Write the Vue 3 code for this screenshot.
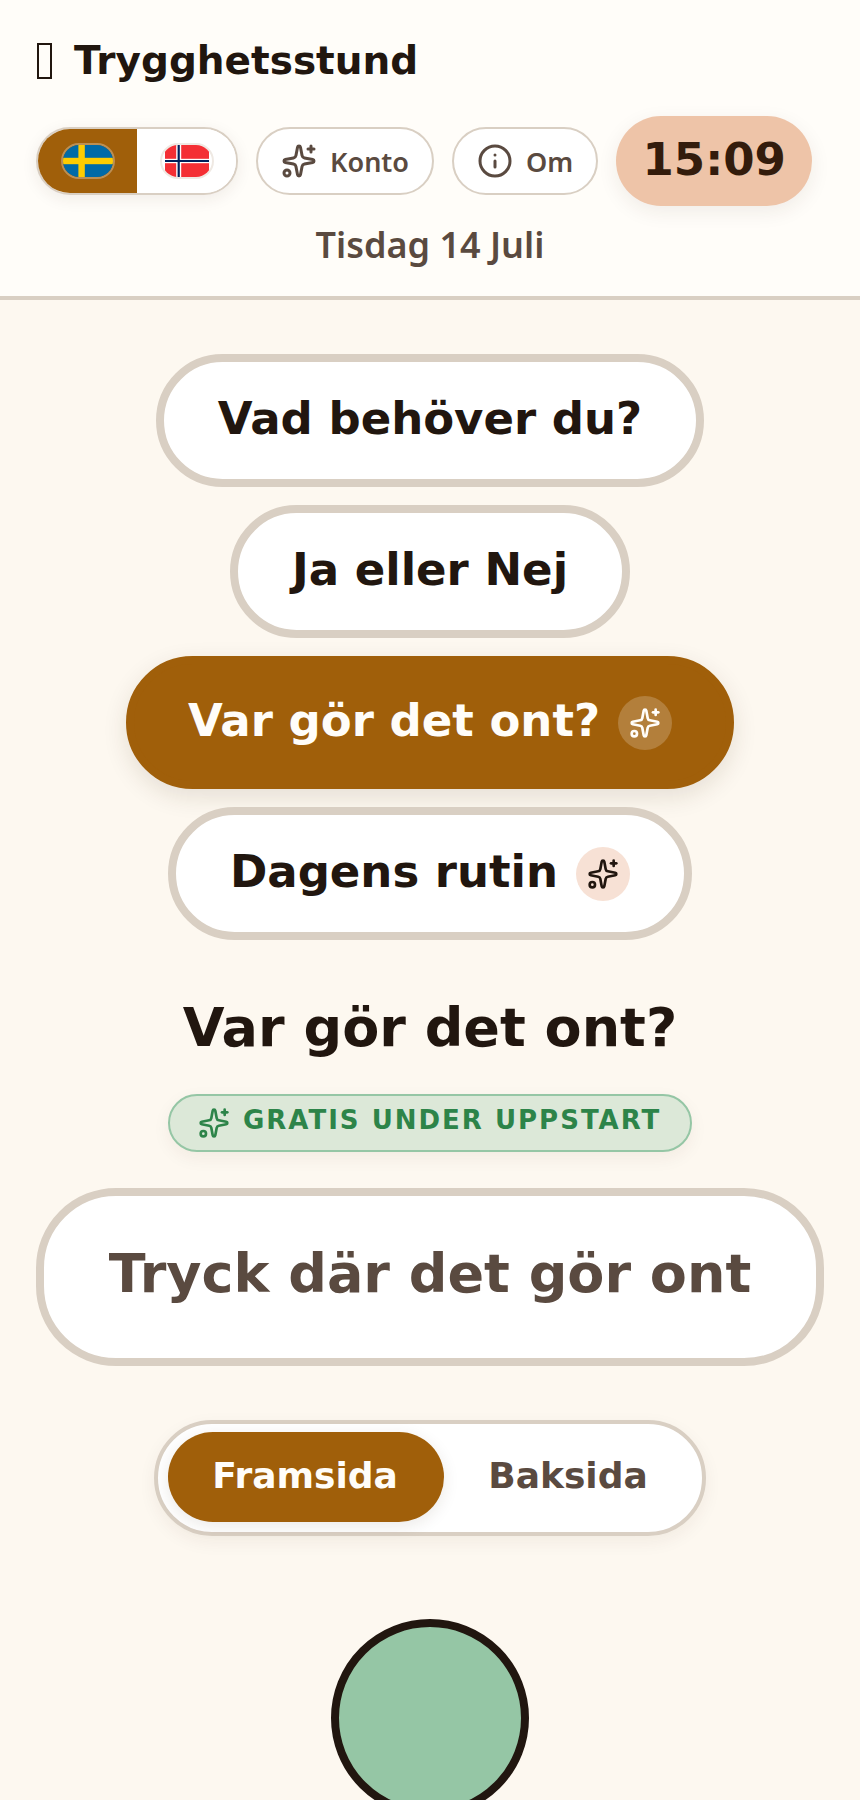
<template>
  <div class="page">
    <header class="top">
      <h1 class="brand"><span class="brand-icon"></span>Trygghetsstund</h1>
      <div class="controls">
        <div class="lang">
          <button class="lang-btn active">
            <svg class="flag se" viewBox="0 0 16 10" preserveAspectRatio="xMidYMid slice">
              <rect width="16" height="10" fill="#006aa7" />
              <rect x="5" width="2" height="10" fill="#fecc00" />
              <rect y="4" width="16" height="2" fill="#fecc00" />
            </svg>
          </button>
          <button class="lang-btn">
            <svg class="flag no" viewBox="0 0 22 16">
              <rect width="22" height="16" fill="#f42f34" />
              <rect x="5.6" width="2.5" height="16" fill="#fff" />
              <rect y="6.9" width="22" height="2.2" fill="#fff" />
              <rect x="6.3" width="1.1" height="16" fill="#00205b" />
              <rect y="7.5" width="22" height="1" fill="#00205b" />
            </svg>
          </button>
        </div>
        <button class="chip">
          <svg class="chip-icon" viewBox="0 0 24 24"><use href="#spark" /></svg>
          Konto
        </button>
        <button class="chip">
          <svg class="chip-icon" viewBox="0 0 24 24">
            <circle cx="12" cy="12" r="10" />
            <path d="M12 16v-4" />
            <path d="M12 8h.01" />
          </svg>
          Om
        </button>
        <div class="clock">15:09</div>
      </div>
      <div class="date">Tisdag 14 Juli</div>
    </header>

    <svg class="defs" width="0" height="0">
      <symbol id="spark" viewBox="0 0 24 24">
        <path d="M11.017 2.814a1 1 0 0 1 1.966 0l1.051 5.558a2 2 0 0 0 1.594 1.594l5.558 1.051a1 1 0 0 1 0 1.966l-5.558 1.051a2 2 0 0 0-1.594 1.594l-1.051 5.558a1 1 0 0 1-1.966 0l-1.051-5.558a2 2 0 0 0-1.594-1.594l-5.558-1.051a1 1 0 0 1 0-1.966l5.558-1.051a2 2 0 0 0 1.594-1.594z" />
        <path d="M20 2v4" />
        <path d="M22 4h-4" />
        <circle cx="4" cy="20" r="2" />
      </symbol>
    </svg>

    <main class="content">
      <nav class="menu">
        <button v-for="item in menu" :key="item.label" class="menu-btn" :class="{ active: item.active }">
          <span class="menu-label">{{ item.label }}</span>
          <span v-if="item.spark" class="spark-dot">
            <svg viewBox="0 0 24 24"><use href="#spark" /></svg>
          </span>
        </button>
      </nav>

      <h2 class="heading">Var gör det ont?</h2>
      <div class="badge">
        <svg viewBox="0 0 24 24"><use href="#spark" /></svg>
        <span class="badge-label">GRATIS UNDER UPPSTART</span>
      </div>
      <div class="prompt">Tryck där det gör ont</div>

      <div class="side-toggle">
        <button class="side active">Framsida</button>
        <button class="side">Baksida</button>
      </div>

      <svg class="head" viewBox="0 0 198 198">
        <circle cx="99" cy="99" r="95" />
      </svg>
    </main>
  </div>
</template>

<script setup>
  const menu = [
    { label: 'Vad behöver du?' },
    { label: 'Ja eller Nej' },
    { label: 'Var gör det ont?', active: true, spark: true },
    { label: 'Dagens rutin', spark: true },
  ];
</script>

<style>
  body {
    background: #fdf8f0;
  }
</style>

<style scoped>
  .page {
    font-family: 'DejaVu Sans', sans-serif;
    color: #21160f;
  }

  button {
    font-family: inherit;
    cursor: pointer;
  }

  .defs {
    position: absolute;
  }

  svg {
    fill: none;
    stroke: currentColor;
    stroke-width: 2;
    stroke-linecap: round;
    stroke-linejoin: round;
  }

  .top {
    background: #fffdf9;
    border-bottom: 4px solid #d9cfc3;
    padding: 32px 36px 27px;
  }

  .brand {
    display: flex;
    align-items: center;
    gap: 22px;
    margin: 0;
    padding-left: 1px;
    font-size: 39px;
    line-height: 58px;
    font-weight: 700;
  }

  /* missing-glyph box in front of the name */
  .brand-icon {
    width: 15px;
    height: 36px;
    box-sizing: border-box;
    border: 2px solid #21160f;
  }

  .controls {
    display: flex;
    align-items: center;
    gap: 18px;
    margin-top: 26px;
  }

  .lang {
    display: flex;
    width: 202px;
    height: 68px;
    box-sizing: border-box;
    border: 2px solid #d9cfc3;
    border-radius: 34px;
    overflow: hidden;
    background: #fff;
    box-shadow: 0 4px 16px rgba(60, 40, 20, 0.08);
  }

  .lang-btn {
    flex: 1;
    border: none;
    background: #fff;
    padding: 0;
    display: flex;
    align-items: center;
    justify-content: center;
  }

  .lang-btn.active {
    background: #a05f0a;
  }

  .flag {
    width: 54px;
    height: 36px;
    box-sizing: border-box;
    border-radius: 18px;
    stroke: none;
  }

  .flag.se {
    border: 2px solid rgba(255, 255, 255, 0.3);
  }

  .flag.no {
    border: 2px solid #efe9e3;
  }

  .chip {
    display: flex;
    align-items: center;
    gap: 13px;
    height: 68px;
    box-sizing: border-box;
    padding: 0 23px;
    border: 2px solid #d9cfc3;
    border-radius: 34px;
    background: #fff;
    color: #5a4a40;
    font-family: 'Noto Sans', sans-serif;
    font-size: 27px;
    font-weight: 600;
  }

  .chip-icon {
    width: 36px;
    height: 36px;
  }

  .clock {
    width: 196px;
    height: 90px;
    box-sizing: border-box;
    padding-bottom: 4px;
    border-radius: 45px;
    background: #eec4a8;
    color: #331c0c;
    font-size: 45px;
    font-weight: 700;
    display: flex;
    align-items: center;
    justify-content: center;
    box-shadow: 0 6px 20px rgba(60, 40, 20, 0.08);
  }

  .date {
    margin-top: 14px;
    text-align: center;
    font-family: 'Noto Sans', sans-serif;
    font-size: 36px;
    line-height: 49px;
    font-weight: 600;
    color: #5a4a40;
  }

  .content {
    display: flex;
    flex-direction: column;
    align-items: center;
    padding: 54px 36px 0;
  }

  .menu {
    display: flex;
    flex-direction: column;
    align-items: center;
    gap: 18px;
  }

  .menu-btn {
    display: flex;
    align-items: center;
    gap: 18px;
    height: 133px;
    box-sizing: border-box;
    padding: 0 54px;
    border: 8px solid #d9cfc3;
    border-radius: 67px;
    background: #fff;
    color: #21160f;
    font-size: 45px;
    font-weight: 700;
  }

  .menu-label {
    margin-bottom: 5px;
  }

  .menu-btn.active {
    background: #a05f0a;
    border-color: #a05f0a;
    color: #fffdf9;
    box-shadow: 0 8px 24px rgba(60, 40, 20, 0.12);
  }

  .spark-dot {
    width: 54px;
    height: 54px;
    border-radius: 50%;
    background: #f7e1d5;
    display: flex;
    align-items: center;
    justify-content: center;
  }

  .menu-btn.active .spark-dot {
    background: rgba(255, 255, 255, 0.2);
  }

  .spark-dot svg {
    width: 32px;
    height: 32px;
  }

  .heading {
    margin: 55px 0 0;
    font-size: 54px;
    line-height: 66px;
    font-weight: 700;
  }

  .badge {
    display: flex;
    align-items: center;
    gap: 13px;
    width: 524px;
    height: 58px;
    box-sizing: border-box;
    margin-top: 33px;
    padding: 0 28px;
    border: 2px solid #95c6a5;
    border-radius: 29px;
    background: #dce8d8;
    color: #2d8449;
    font-size: 26px;
    font-weight: 700;
    letter-spacing: 2px;
    white-space: nowrap;
    box-shadow: 0 6px 18px rgba(60, 40, 20, 0.06);
  }

  .badge svg {
    width: 32px;
    height: 32px;
  }

  .badge-label {
    margin-bottom: 6px;
  }

  .prompt {
    width: 788px;
    height: 178px;
    box-sizing: border-box;
    margin-top: 36px;
    padding-bottom: 8px;
    border: 8px solid #d9cfc3;
    border-radius: 80px;
    background: #fff;
    color: #5a4a40;
    font-size: 54px;
    font-weight: 700;
    display: flex;
    align-items: center;
    justify-content: center;
  }

  .side-toggle {
    display: flex;
    align-items: flex-start;
    width: 552px;
    height: 116px;
    box-sizing: border-box;
    margin-top: 54px;
    padding: 8px 10px;
    border: 4px solid #d9cfc3;
    border-radius: 58px;
    background: #fff;
    box-shadow: 0 6px 18px rgba(60, 40, 20, 0.06);
  }

  .side {
    flex: 1;
    height: 90px;
    padding: 0 0 4px 0;
    border: none;
    background: transparent;
    border-radius: 45px;
    color: #5a4a40;
    font-size: 36px;
    font-weight: 700;
  }

  .side.active {
    flex: 0 0 276px;
    padding-right: 2px;
    background: #a05f0a;
    color: #fffdf9;
    box-shadow: 0 4px 16px rgba(60, 40, 20, 0.1);
  }

  .head {
    width: 198px;
    height: 198px;
    flex-shrink: 0;
    margin-top: 83px;
    fill: #95c6a5;
    stroke: #21160f;
    stroke-width: 8;
    display: block;
  }
</style>
